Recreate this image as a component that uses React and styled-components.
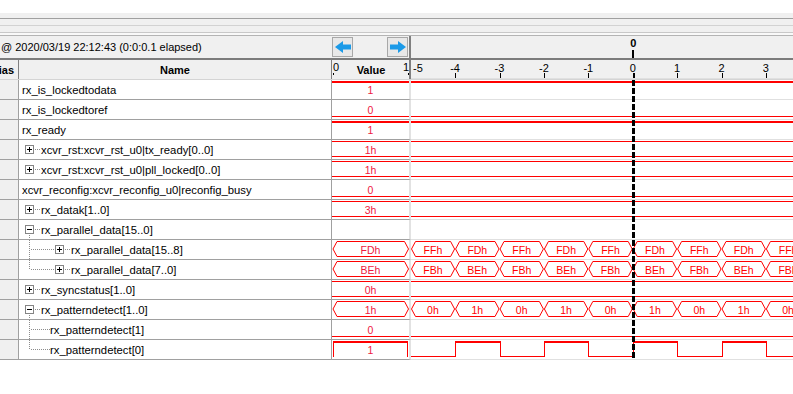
import React from 'react'
import styled, { createGlobalStyle } from 'styled-components'

const GlobalStyle = createGlobalStyle`
  * { box-sizing: border-box; }
  body {
    margin: 0;
    background: #fff;
    color: #000;
    font-family: "Liberation Sans", Arial, sans-serif;
    font-size: 11px;
  }
`

// time axis of the waveform pane (px from its left edge)
const ORIGIN = 221.7
const UNIT = 44.4
const WAVE_W = 382
const VAL_W = 77
const RED = '#ff0000'
const tx = (t) => ORIGIN + UNIT * t
const TIMES = [-5, -4, -3, -2, -1, 0, 1, 2, 3]

const Page = styled.div`
  width: 793px;
  padding-top: 13px;
  overflow: hidden;
`

const Band = styled.div`
  height: 23px;
  background-color: #f0f0f0;
  background-image: linear-gradient(
    to bottom,
    transparent 5px, #a0a0a0 5px, #a0a0a0 6px,
    transparent 6px, transparent 12px, #d2d2d2 12px, #d2d2d2 13px,
    transparent 13px, transparent 19px, #c8c8c8 19px, #c8c8c8 20px,
    #f9f9f9 20px
  );
  border-bottom: 1px solid #b4b4b4;
`

const Toolbar = styled.div`
  display: grid;
  grid-template-columns: 332px 77px 1fr;
  height: 24px;
  background: #f0f0f0;
  border-bottom: 2px solid #7c7c7c;
`

const Stamp = styled.div`
  display: flex;
  align-items: center;
  white-space: nowrap;
  overflow: hidden;
  padding-left: 1px;
`

const Nav = styled.div`
  display: flex;
  align-items: center;
  justify-content: space-between;
  padding-right: 1px;
`

const NavButton = styled.button`
  width: 21px;
  height: 20px;
  margin: 0;
  padding: 0;
  border: 1px solid #a8a8a8;
  background: #e8e8e8;
  display: flex;
  align-items: center;
  justify-content: center;
`

const ArrowSvg = styled.svg`
  display: block;
  transform: ${(p) => (p.$flip ? 'scaleX(-1)' : 'none')};
`

const MarkerBar = styled.div`
  border-left: 2px solid #808080;
  overflow: hidden;
`

const Table = styled.div`
  position: relative;
`

const HeaderRow = styled.div`
  display: grid;
  grid-template-columns: 19px 313px 79px 1fr;
  height: 20px;
  background: #f0f0f0;
  border-bottom: 1px solid #d4d4d4;
`

const HeadCell = styled.div`
  display: flex;
  align-items: center;
  justify-content: ${(p) => p.$align || 'center'};
  padding-right: ${(p) => p.$padRight || 0}px;
  border-right: ${(p) => p.$edge || 1}px solid #808080;
  font-weight: bold;
  white-space: nowrap;
  overflow: hidden;
`

const ValueHead = styled(HeadCell)`
  justify-content: space-between;
  align-items: stretch;
  padding: 0 0 0 1px;
`

const ScaleMark = styled.span`
  display: flex;
  flex-direction: column;
  justify-content: space-between;
  align-items: ${(p) => (p.$end ? 'flex-end' : 'flex-start')};
  font-weight: normal;
  line-height: 11px;
  padding: 2px 0 4px;

  &::after {
    content: '';
    width: 1px;
    height: 3px;
    background: #000;
  }
`

const HeadTitle = styled.span`
  align-self: center;
  margin-top: 1px;
`

const Row = styled.div`
  display: grid;
  grid-template-columns: 19px 313px 79px 1fr;
  height: 20px;
`

const AliasCell = styled.div`
  background: #f0f0f0;
  border-right: 1px solid #a0a0a0;
  border-bottom: 1px solid #a0a0a0;
`

const NameCell = styled.div`
  display: flex;
  align-items: center;
  padding-left: 3px;
  font-size: 11.3px;
  white-space: nowrap;
  overflow: hidden;
  border-right: 1px solid #a0a0a0;
  border-bottom: 1px solid #a0a0a0;
`

const ValueCell = styled.div`
  border-right: 2px solid #e2e2e2;
  border-bottom: 1px solid #a0a0a0;
  overflow: hidden;
`

const WaveCell = styled.div`
  border-bottom: 1px solid #e0e0e0;
  overflow: hidden;
`

const TraceSvg = styled.svg`
  display: block;
`

const Label = styled.text`
  font-size: 10.5px;
  fill: ${(p) => p.$tone || RED};
  text-anchor: middle;
`

const Cursor = styled.div`
  position: absolute;
  left: 632px;
  top: 20px;
  width: 3px;
  height: 279px;
  background: repeating-linear-gradient(to bottom, #000 0 6px, transparent 6px 8px);
`

const rows = [
  { name: 'rx_is_lockedtodata', kind: 'high', value: '1' },
  { name: 'rx_is_lockedtoref', kind: 'low', value: '0' },
  { name: 'rx_ready', kind: 'high', value: '1' },
  { name: 'xcvr_rst:xcvr_rst_u0|tx_ready[0..0]', tree: 'plus', kind: 'bus', value: '1h' },
  { name: 'xcvr_rst:xcvr_rst_u0|pll_locked[0..0]', tree: 'plus', kind: 'bus', value: '1h' },
  { name: 'xcvr_reconfig:xcvr_reconfig_u0|reconfig_busy', kind: 'low', value: '0' },
  { name: 'rx_datak[1..0]', tree: 'plus', kind: 'bus', value: '3h' },
  { name: 'rx_parallel_data[15..0]', tree: 'minus', kind: 'none' },
  { name: 'rx_parallel_data[15..8]', tree: 'subPlus', kind: 'toggle', values: ['FFh', 'FDh'], value: 'FDh' },
  { name: 'rx_parallel_data[7..0]', tree: 'subPlusLast', kind: 'toggle', values: ['FBh', 'BEh'], value: 'BEh' },
  { name: 'rx_syncstatus[1..0]', tree: 'plus', kind: 'bus', value: '0h' },
  { name: 'rx_patterndetect[1..0]', tree: 'minus', kind: 'toggle', values: ['0h', '1h'], value: '1h' },
  { name: 'rx_patterndetect[1]', tree: 'sub', kind: 'low', value: '0' },
  { name: 'rx_patterndetect[0]', tree: 'subLast', kind: 'clock', value: '1' },
]

const DOT = '#8c8c8c'

function ExpandBox({ x, open }) {
  return (
    <g>
      <rect x={x + 0.5} y={5.5} width={8} height={8} fill="#fff" stroke="#848484" />
      <line x1={x + 2} x2={x + 7} y1={9.5} y2={9.5} stroke="#000" />
      {!open && <line x1={x + 4.5} x2={x + 4.5} y1={7} y2={12} stroke="#000" />}
    </g>
  )
}

function Tree({ type }) {
  if (!type) return null
  const sub = type.startsWith('sub')
  const last = type.endsWith('Last')
  const boxed = type === 'plus' || type === 'minus' || type.startsWith('subPlus')
  const width = !sub ? 19 : boxed ? 49 : 28
  return (
    <TraceSvg width={width} height={19} shapeRendering="crispEdges">
      {sub && (
        <>
          <line x1={7.5} x2={7.5} y1={0} y2={last ? 10 : 19} stroke={DOT} strokeDasharray="1 1" />
          <line x1={9} x2={boxed ? 33 : 28} y1={9.5} y2={9.5} stroke={DOT} strokeDasharray="1 1" />
        </>
      )}
      {boxed && (
        <>
          <ExpandBox x={sub ? 33 : 3} open={type === 'minus'} />
          <line x1={sub ? 43 : 13} x2={width} y1={9.5} y2={9.5} stroke={DOT} strokeDasharray="1 1" />
        </>
      )}
      {type === 'minus' && (
        <line x1={7.5} x2={7.5} y1={15} y2={19} stroke={DOT} strokeDasharray="1 1" />
      )}
    </TraceSvg>
  )
}

const hex = (x0, x1, d = 4) =>
  `M${x0} 9 L${x0 + d} 1.5 H${x1 - d} L${x1} 9 L${x1 - d} 16.5 H${x0 + d} Z`

function ValueTrace({ row }) {
  const w = VAL_W
  const tone = '#ee1840'
  const mid = 38.5
  return (
    <TraceSvg width={w} height={19}>
      {row.kind === 'high' && <rect x={0} y={1} width={w} height={2} fill={RED} />}
      {row.kind === 'low' && <line x1={0} x2={w} y1={16.5} y2={16.5} stroke={RED} />}
      {row.kind === 'bus' && (
        <>
          <line x1={0} x2={w} y1={1.5} y2={1.5} stroke={RED} />
          <line x1={0} x2={w} y1={16.5} y2={16.5} stroke={RED} />
        </>
      )}
      {row.kind === 'toggle' && <path d={hex(1, 76.5)} fill="none" stroke={RED} />}
      {row.kind === 'clock' && (
        <>
          <rect x={1} y={1} width={75} height={2} fill={RED} />
          <line x1={1.5} x2={1.5} y1={1} y2={17} stroke={RED} />
          <line x1={75.5} x2={75.5} y1={1} y2={17} stroke={RED} />
        </>
      )}
      {row.value && (
        <Label x={mid} y={13.5} $tone={tone}>
          {row.value}
        </Label>
      )}
    </TraceSvg>
  )
}

function WaveTrace({ row }) {
  const w = WAVE_W
  if (row.kind === 'none') return null
  if (row.kind === 'high') {
    return (
      <TraceSvg width={w} height={19}>
        <rect x={0} y={1} width={w} height={2} fill={RED} />
      </TraceSvg>
    )
  }
  if (row.kind === 'low') {
    return (
      <TraceSvg width={w} height={19}>
        <line x1={0} x2={w} y1={16.5} y2={16.5} stroke={RED} />
      </TraceSvg>
    )
  }
  if (row.kind === 'bus') {
    return (
      <TraceSvg width={w} height={19}>
        <line x1={0} x2={w} y1={1.5} y2={1.5} stroke={RED} />
        <line x1={0} x2={w} y1={16.5} y2={16.5} stroke={RED} />
      </TraceSvg>
    )
  }
  if (row.kind === 'toggle') {
    return (
      <TraceSvg width={w} height={19}>
        {TIMES.map((t) => {
          const x0 = Math.max(0.5, tx(t) + 0.5)
          const x1 = tx(t + 1) - 0.5
          const label = row.values[Math.abs(t) % 2 === 1 ? 0 : 1]
          return (
            <g key={t}>
              <path d={hex(x0, x1)} fill="none" stroke={RED} />
              <Label x={(tx(t) + tx(t + 1)) / 2} y={13.5}>
                {label}
              </Label>
            </g>
          )
        })}
      </TraceSvg>
    )
  }
  // clock: high on even time units
  return (
    <TraceSvg width={w} height={19}>
      {TIMES.map((t) => {
        const x0 = Math.max(0, Math.round(tx(t)))
        const x1 = Math.round(tx(t + 1))
        const high = Math.abs(t) % 2 === 0
        return (
          <g key={t}>
            {high ? (
              <rect x={x0} y={1} width={x1 - x0} height={2} fill={RED} />
            ) : (
              <line x1={x0} x2={x1} y1={16.5} y2={16.5} stroke={RED} />
            )}
            <line x1={x1 + 0.5} x2={x1 + 0.5} y1={1} y2={17} stroke={RED} />
          </g>
        )
      })}
    </TraceSvg>
  )
}

function Ruler() {
  return (
    <TraceSvg width={WAVE_W} height={19}>
      {TIMES.map((t) =>
        t === -5 ? (
          <text key={t} x={2} y={12} fontSize="11">
            -5
          </text>
        ) : (
          <g key={t}>
            <text x={tx(t)} y={12} fontSize="11" textAnchor="middle">
              {t}
            </text>
            <rect x={Math.round(tx(t))} y={13} width={t === 0 ? 2 : 1} height={5} fill="#000" />
          </g>
        )
      )}
    </TraceSvg>
  )
}

function Arrow({ flip }) {
  return (
    <ArrowSvg $flip={flip} width="16" height="12" viewBox="0 0 16 12">
      <path d="M0 6 L8 0 V3.5 H16 V8.5 H8 V12 Z" fill="#1b9ae8" />
    </ArrowSvg>
  )
}

export default function App() {
  return (
    <Page>
      <GlobalStyle />
      <Band />
      <Toolbar>
        <Stamp>@ 2020/03/19 22:12:43 (0:0:0.1 elapsed)</Stamp>
        <Nav>
          <NavButton>
            <Arrow />
          </NavButton>
          <NavButton>
            <Arrow flip />
          </NavButton>
        </Nav>
        <MarkerBar>
          <TraceSvg width={WAVE_W} height={22}>
            <text x={tx(0) + 0.5} y={11} fontSize="11" fontWeight="bold" textAnchor="middle">
              0
            </text>
            <rect x={Math.round(tx(0)) - 1} y={14} width={2} height={8} fill="#000" />
          </TraceSvg>
        </MarkerBar>
      </Toolbar>
      <Table>
        <HeaderRow>
          <HeadCell $align="flex-end" $padRight={4}>
            Alias
          </HeadCell>
          <HeadCell>Name</HeadCell>
          <ValueHead $edge={2}>
            <ScaleMark>0</ScaleMark>
            <HeadTitle>Value</HeadTitle>
            <ScaleMark $end>1</ScaleMark>
          </ValueHead>
          <WaveCell>
            <Ruler />
          </WaveCell>
        </HeaderRow>
        {rows.map((row) => (
          <Row key={row.name}>
            <AliasCell />
            <NameCell>
              <Tree type={row.tree} />
              {row.name}
            </NameCell>
            <ValueCell>
              <ValueTrace row={row} />
            </ValueCell>
            <WaveCell>
              <WaveTrace row={row} />
            </WaveCell>
          </Row>
        ))}
        <Cursor />
      </Table>
    </Page>
  )
}
